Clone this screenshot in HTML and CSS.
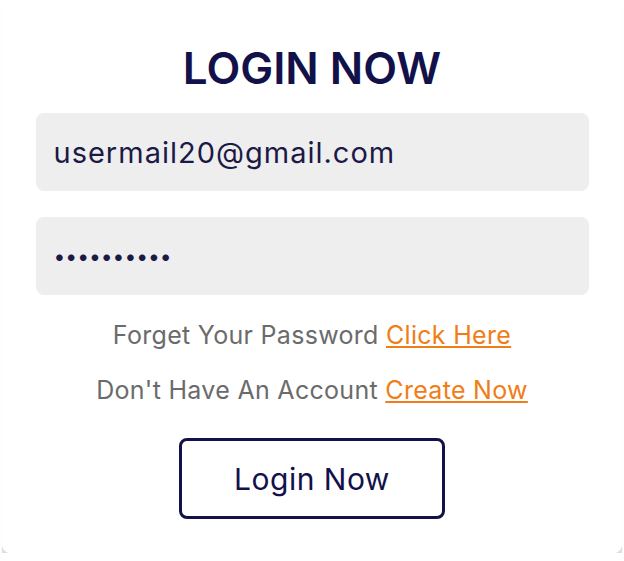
FILE: index.html
```html
<!DOCTYPE html>
<html lang="en">
<head>
    <meta charset="UTF-8">
    <meta name="viewport" content="width=device-width, initial-scale=1.0">
    <title>Login</title>
    <link rel="stylesheet" href="styles.css">
</head>
<body>
    <div class="card">
        <h2 class="title">LOGIN NOW</h2>
        <form class="login-form">
            <input type="email" class="field" value="usermail20@gmail.com">
            <input type="password" class="field field-pass" value="password12">
            <p class="note note-first">Forget Your Password <a href="#">Click Here</a></p>
            <p class="note">Don't Have An Account <a href="#">Create Now</a></p>
            <button type="button" class="btn">Login Now</button>
        </form>
    </div>
</body>
</html>
```

FILE: styles.css
```css
body {
  font-family: Inter, "Open Sans", sans-serif;
  margin: 0;
  padding: 0;
  background-color: #fff;
}
.card {
  margin: 0 2px;
  height: 553px;
  box-sizing: border-box;
  padding-top: 40px;
  background-color: #fff;
  border-radius: 0 0 8px 8px;
  box-shadow: 0 8px 1px #dcdcdc;
}
.title {
  margin: 0;
  text-align: center;
  font-size: 44px;
  font-weight: 600;
  line-height: 56px;
  color: #13114a;
}
.login-form {
  display: flex;
  flex-direction: column;
  align-items: center;
  margin-top: 17px;
}
.field {
  width: 553px;
  height: 78px;
  box-sizing: border-box;
  margin: 0 0 26px 0;
  padding: 0 18px;
  border: none;
  border-radius: 8px;
  background-color: #eeeeee;
  font-family: inherit;
  font-size: 29px;
  letter-spacing: 1px;
  color: #1b1a46;
  outline: none;
}
.field-pass {
  margin-bottom: 0;
  font-size: 21px;
  letter-spacing: 0;
}
.note {
  margin: 0 0 22px 0;
  font-size: 25px;
  letter-spacing: 0.3px;
  line-height: 33px;
  color: #6b6b6b;
}
.note-first {
  margin-top: 24px;
}
.note a {
  color: #f07d16;
  text-decoration: underline;
}
.btn {
  margin-top: 9px;
  width: 266px;
  height: 81px;
  background-color: #fff;
  border: 3px solid #13114a;
  border-radius: 8px;
  font-family: inherit;
  font-size: 30px;
  letter-spacing: 0.5px;
  color: #13114a;
  cursor: pointer;
}
```
